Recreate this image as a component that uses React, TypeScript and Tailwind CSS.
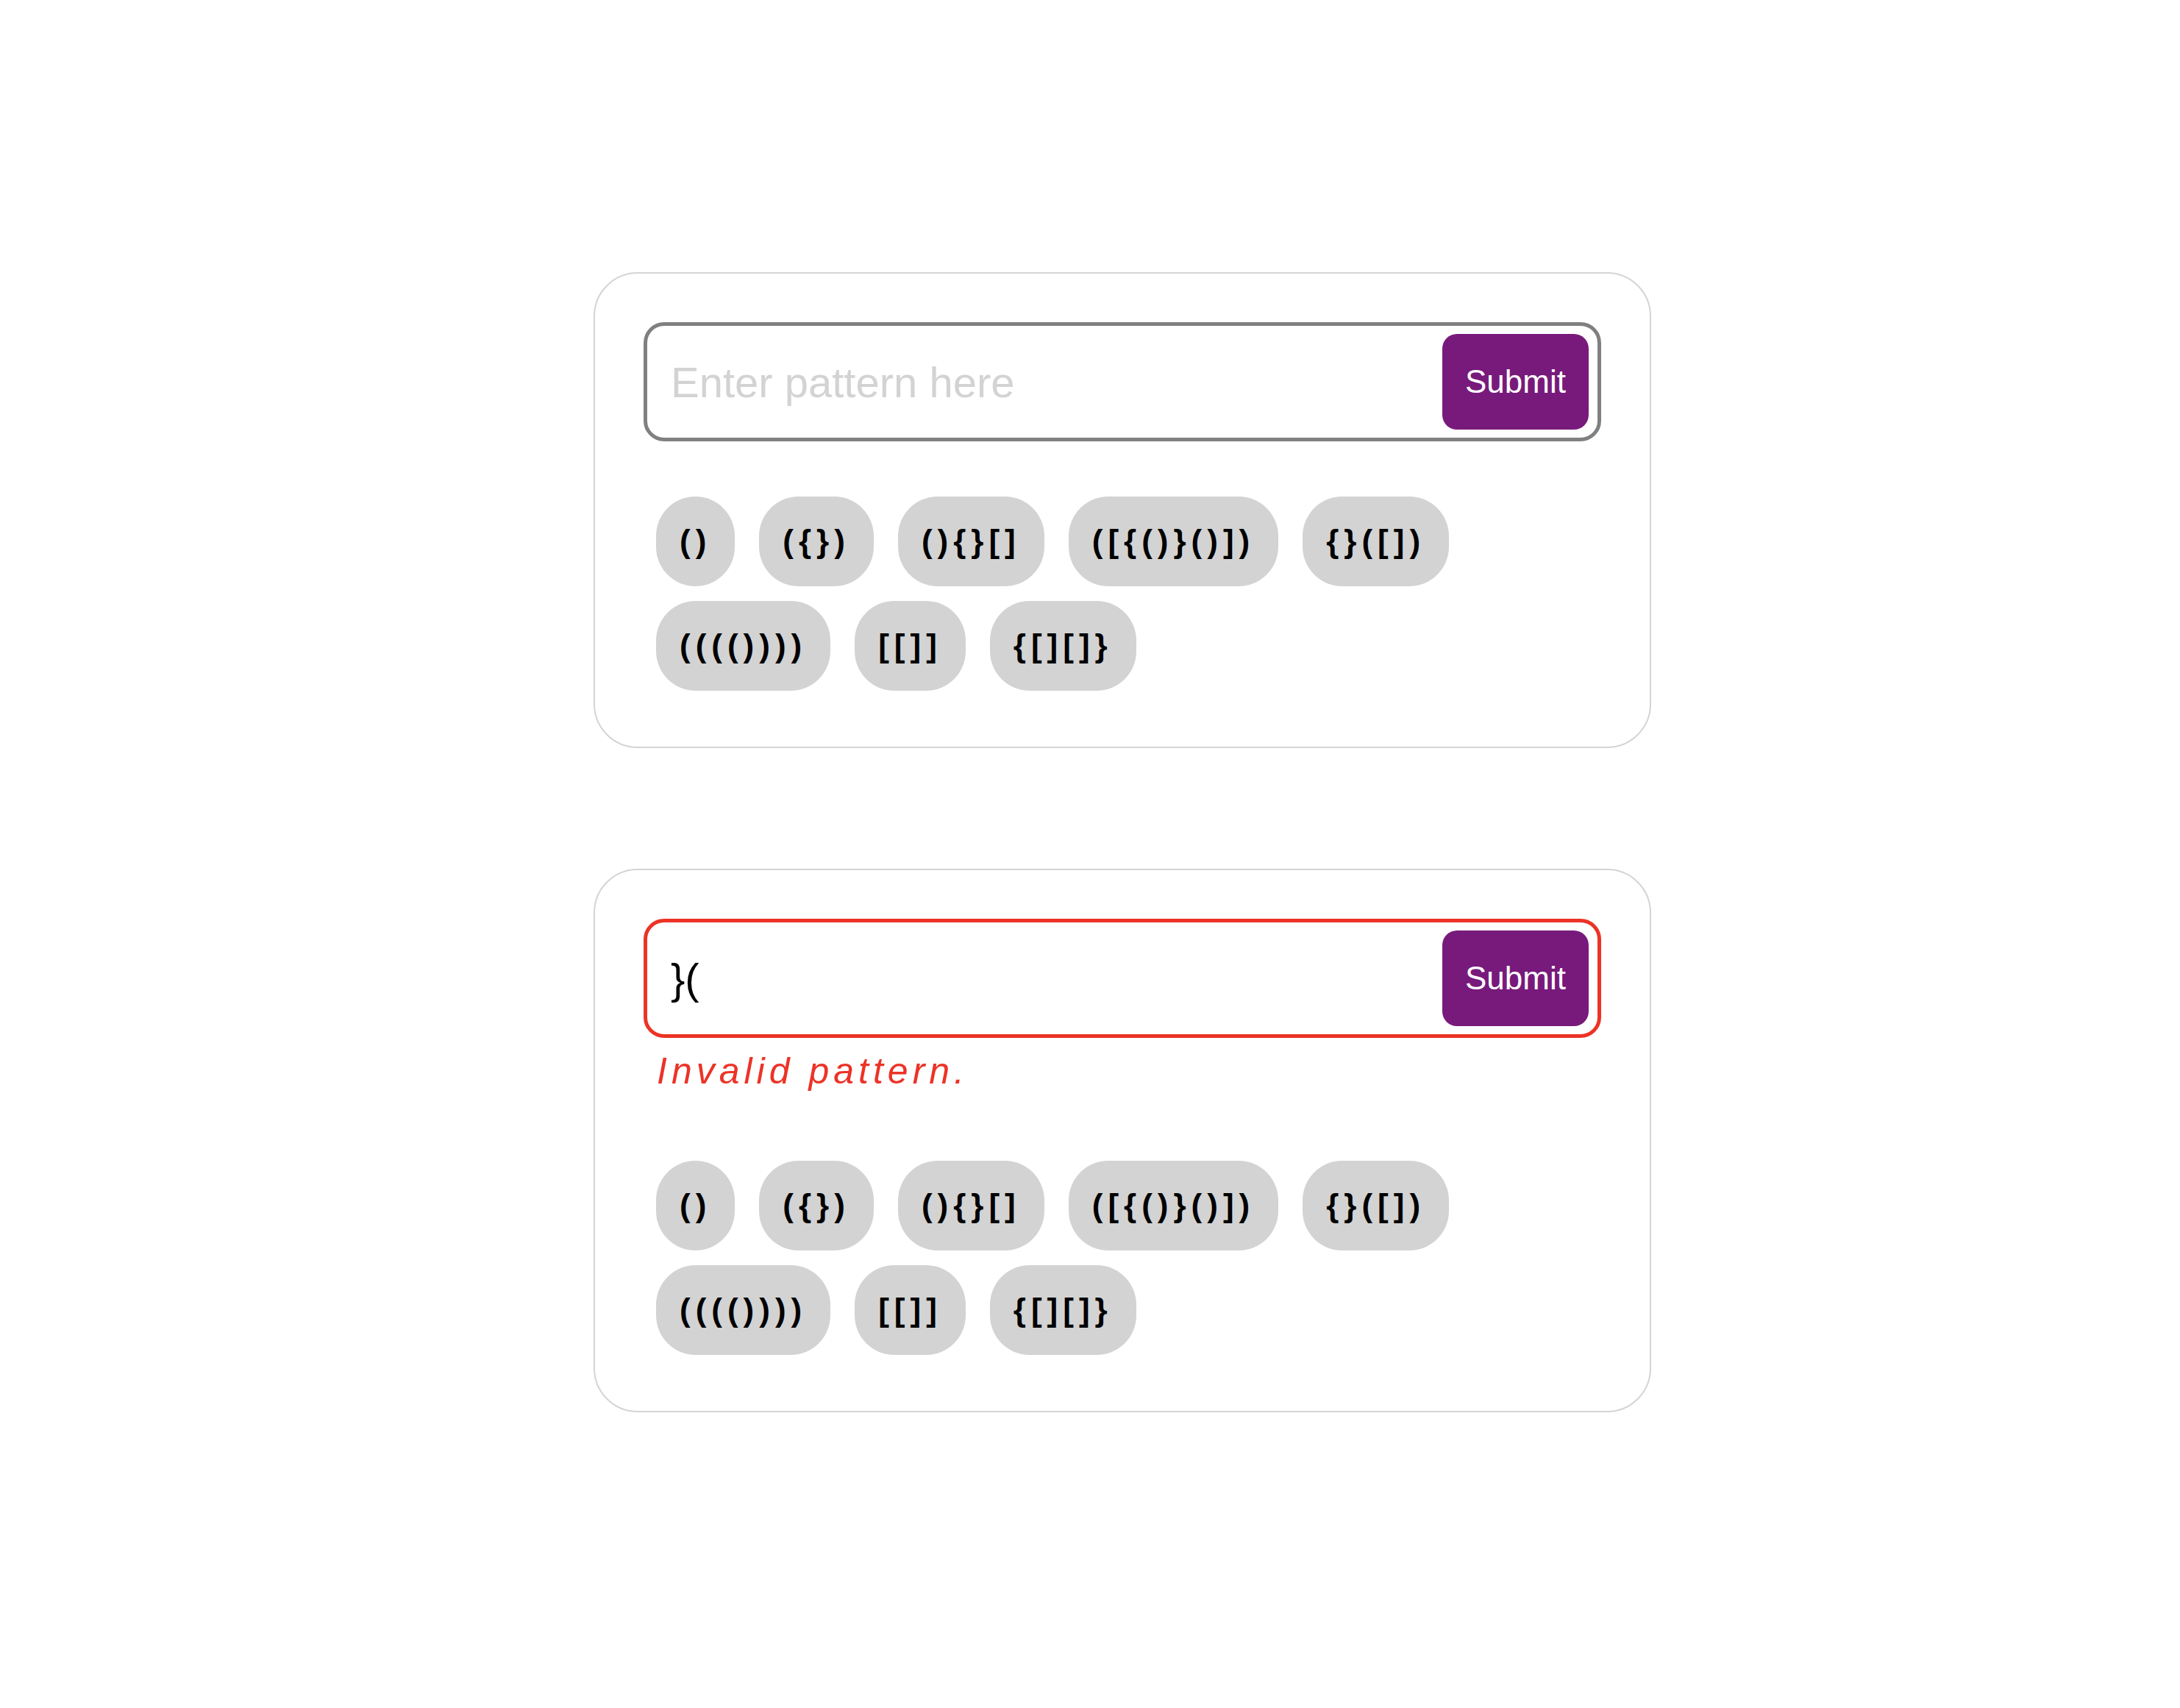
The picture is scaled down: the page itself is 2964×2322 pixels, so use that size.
import { useState } from 'react'

const patterns = ['()', '({})', '(){}[]', '([{()}()])', '{}([])', '(((())))', '[[]]', '{[][]}']

interface PatternCardProps {
  initial?: string
  error?: string
}

function PatternCard({ initial = '', error }: PatternCardProps) {
  const [value, setValue] = useState(initial)

  return (
    <div className="w-[1438px] rounded-[60px] border-2 border-[#d4d4d4] bg-white px-[66px] pt-[66px] pb-[76px]">
      {/* Input row */}
      <div
        className={`flex h-[162px] items-center rounded-[28px] border-[5px] bg-white py-[11px] pr-[12px] pl-[32px] ${
          error ? 'border-[#ec3326]' : 'border-[#808080]'
        }`}
      >
        <input
          value={value}
          onChange={(e) => setValue(e.target.value)}
          placeholder="Enter pattern here"
          className="min-w-0 flex-1 bg-transparent text-[58px] text-black outline-none placeholder:text-[#d3d3d3]"
          style={{ fontFamily: '"Liberation Sans", Arial, sans-serif' }}
        />
        <button className="flex h-[130px] w-[199px] items-center justify-center rounded-[20px] bg-[#771a7b] text-[44px] text-white">
          Submit
        </button>
      </div>

      {/* Error message */}
      {error && (
        <p className="mt-[17px] px-[18px] text-[50px] leading-[1.15] tracking-[6px] text-[#ec3326] italic">
          {error}
        </p>
      )}

      {/* Pattern chips */}
      <div
        className={`flex flex-wrap gap-x-[33px] gap-y-[20px] px-[17px] ${
          error ? 'mt-[92px]' : 'mt-[75px]'
        }`}
      >
        {patterns.map((p) => (
          <button
            key={p}
            onClick={() => setValue(p)}
            className="flex h-[122px] items-center rounded-[54px] bg-[#d3d3d3] px-[32px] text-[44px] font-bold tracking-[7px] text-black"
          >
            {p}
          </button>
        ))}
      </div>
    </div>
  )
}

export default function App() {
  return (
    <div
      className="min-h-screen bg-white pt-[370px] pl-[807px]"
      style={{ fontFamily: '"Liberation Sans", Arial, sans-serif' }}
    >
      <div className="flex flex-col gap-[164px]">
        <PatternCard />
        <PatternCard initial="}(" error="Invalid pattern." />
      </div>
    </div>
  )
}
